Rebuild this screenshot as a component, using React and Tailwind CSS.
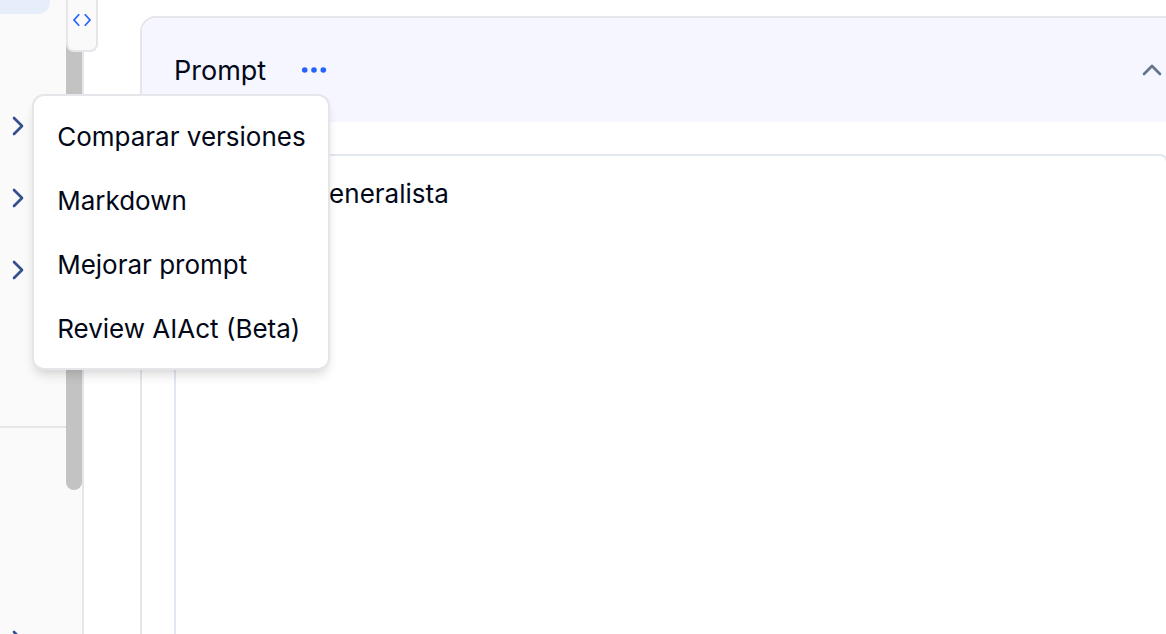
import React, { useState } from 'react';
import { ChevronRight, ChevronUp } from 'lucide-react';

const menuItems = ['Comparar versiones', 'Markdown', 'Mejorar prompt', 'Review AIAct (Beta)'];

const CodeIcon = () => (
  <svg viewBox="0 0 24 24" className="w-6 h-6" fill="none" stroke="currentColor" strokeWidth="1.7">
    <path d="M9.2 6.3 L4 12 L9.2 17.7" />
    <path d="M14.8 6.3 L20 12 L14.8 17.7" />
  </svg>
);

const DotsIcon = () => (
  <svg viewBox="0 0 32 32" className="w-8 h-8" fill="currentColor">
    <circle cx="6.7" cy="16" r="2.8" />
    <circle cx="16" cy="16" r="2.8" />
    <circle cx="25.3" cy="16" r="2.8" />
  </svg>
);

const NavGroup = ({ label }) => (
  <button aria-label={label} className="flex items-center w-full h-18 pl-0.5 text-[#354f8e]">
    <ChevronRight className="w-8 h-8" />
  </button>
);

const Sidebar = () => (
  <aside className="relative flex shrink-0 bg-[#fafafa] border-r-2 border-[#e5e5ea]">
    <nav className="w-[66px]">
      <div className="h-3.5 mr-4 rounded-br-xl bg-[#e6eefc]"></div>
      <div className="pt-19 pb-30 border-b-2 border-[#e5e5ea]">
        <NavGroup label="Grupo 1" />
        <NavGroup label="Grupo 2" />
        <NavGroup label="Grupo 3" />
      </div>
      <div className="pt-44">
        <NavGroup label="Grupo 4" />
      </div>
    </nav>
    <div className="w-4 h-[490px] rounded-b-full bg-[#c3c3c3]"></div>

    {/* Toggle that hangs over the sidebar edge */}
    <button
      aria-label="Código"
      className="absolute top-0 left-[66px] flex items-end justify-center w-8 h-13 pb-[18px] rounded-b-lg border-2 border-t-0 border-[#e5e5ea] bg-[#fafafa] text-[#2563ff]"
    >
      <CodeIcon />
    </button>
  </aside>
);

const PromptMenu = () => (
  <ul
    role="menu"
    className="absolute right-0 top-10 z-20 p-2 w-[298px] bg-white border-2 border-[#e5e5ea] rounded-xl shadow-[0_8px_12px_-2px_rgba(0,0,0,0.1),0_4px_8px_-4px_rgba(0,0,0,0.1)]"
  >
    {menuItems.map(item => (
      <li key={item} role="none">
        <button role="menuitem" className="flex items-center w-full h-16 px-[15px] pt-0.5 text-left text-[26px] whitespace-nowrap">
          {item}
        </button>
      </li>
    ))}
  </ul>
);

export default function App() {
  const [open, setOpen] = useState(true);
  const [prompt, setPrompt] = useState('Asistente generalista');

  return (
    <div className="flex h-screen overflow-hidden bg-white text-[#020817] text-[26px] leading-9 font-['Inter',sans-serif]">
      <Sidebar />

      <main className="flex-1 min-w-0 pt-4 pl-14">
        <section className="-mr-9 border-2 border-[#e5e5ea] rounded-2xl">
          <header className="flex items-center justify-between h-26 px-8 rounded-t-2xl bg-[#f5f6ff]">
            <div className="flex items-center gap-8">
              <label htmlFor="prompt" className="pt-0.5 text-[27px]">Prompt</label>
              <div className="relative flex text-[#2563ff]">
                <button aria-label="Opciones" aria-expanded={open} onClick={() => setOpen(!open)}>
                  <DotsIcon />
                </button>
                <div className="text-[#020817]">{open && <PromptMenu />}</div>
              </div>
            </div>
            <button aria-label="Contraer" className="text-[#64748b]">
              <ChevronUp className="w-8 h-8" />
            </button>
          </header>

          <div className="p-8">
            <textarea
              id="prompt"
              value={prompt}
              onChange={e => setPrompt(e.target.value)}
              spellCheck={false}
              className="block w-full h-[640px] px-4 py-5 border-2 border-[#e2e8f0] rounded-lg resize-none outline-none"
            />
          </div>
        </section>
      </main>
    </div>
  );
}
